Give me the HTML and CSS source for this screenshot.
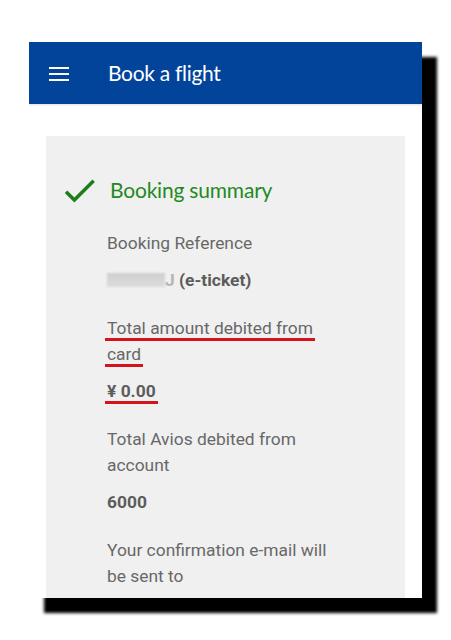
FILE: index.html
```html
<!DOCTYPE html>
<html lang="en">
<head>
<meta charset="utf-8">
<title>Book a flight</title>
<link rel="stylesheet" href="styles.css">
</head>
<body>
<div class="screen">
  <header class="appbar">
    <svg class="menu" width="20" height="14" viewBox="0 0 20 14" aria-hidden="true">
      <rect x="0" y="0" width="20" height="2" fill="#fff"/>
      <rect x="0" y="6" width="20" height="2" fill="#fff"/>
      <rect x="0" y="12" width="20" height="2" fill="#fff"/>
    </svg>
    <h1 class="title">Book a flight</h1>
  </header>
  <main class="content">
    <section class="card">
      <div class="heading">
        <svg class="check" width="41" height="41" viewBox="0 0 24 24" aria-hidden="true">
          <path d="M9 16.17L4.83 12l-1.42 1.41L9 19 21 7l-1.41-1.41z" fill="#1c7d1c"/>
        </svg>
        <h2 class="heading-text">Booking summary</h2>
      </div>
      <dl class="details">
        <dt class="label">Booking Reference</dt>
        <dd class="value"><span class="blur"></span><span class="ghost">J</span> (e-ticket)</dd>
        <dt class="label"><span class="mark">Total amount debited from </span><br><span class="mark">card </span></dt>
        <dd class="value"><span class="mark">¥ 0.00</span></dd>
        <dt class="label">Total Avios debited from<br>account</dt>
        <dd class="value">6000</dd>
        <dt class="label">Your confirmation e-mail will<br>be sent to</dt>
      </dl>
    </section>
  </main>
</div>
</body>
</html>
```
FILE: styles.css
```css
* { box-sizing: border-box; }
html, body { margin: 0; padding: 0; background: #fff; }
body {
  font-family: Roboto, "Liberation Sans", sans-serif;
  min-height: 640px;
  padding: 42px 0 42px 29px;
}

.screen {
  width: 393px;
  height: 556px;
  background: #fff;
  display: flex;
  flex-direction: column;
  overflow: hidden;
  box-shadow: 15px 15px 3px #000;
}

.appbar {
  height: 62px;
  flex: none;
  background: #02449a;
  display: flex;
  align-items: center;
  padding-left: 20px;
  box-shadow: 0 1px 2px rgba(0,0,0,0.12);
  position: relative;
  z-index: 1;
}
.menu { display: block; flex: none; margin-top: 1px; }
.title {
  margin: -2px 0 0 39px;
  font-family: Lato, "Open Sans", sans-serif;
  font-weight: 400;
  font-size: 21px;
  letter-spacing: -0.3px;
  color: #fff;
}

.content {
  flex: 1;
  display: flex;
  flex-direction: column;
  padding: 32px 17px 0 17px;
}
.card {
  flex: 1;
  background: #f0f0f0;
  padding-top: 34px;
}

.heading {
  display: flex;
  align-items: center;
  height: 40px;
  margin-left: 13px;
}
.check { display: block; flex: none; }
.heading-text {
  margin: -1px 0 0 10px;
  font-family: Lato, "Open Sans", sans-serif;
  font-weight: 400;
  font-size: 21px;
  letter-spacing: -0.2px;
  color: #1f8a1f;
}

.details {
  margin: 20px 0 0 0;
  padding-left: 61px;
  font-size: 17.4px;
  line-height: 26px;
  color: #686868;
}
.label { margin: 0; white-space: nowrap; }
.value {
  margin: 11px 0 22px 0;
  font-weight: 700;
  color: #5c5c5c;
  white-space: nowrap;
}

.mark {
  border-bottom: 3px solid #d3141c;
  padding: 0 2px;
  margin-left: -2px;
}

.blur {
  display: inline-block;
  width: 58px;
  height: 14px;
  vertical-align: -1px;
  background: linear-gradient(#cfcfcf, #dcdcdc);
  filter: blur(1px);
}
.ghost { color: #b5b5b5; }
```
